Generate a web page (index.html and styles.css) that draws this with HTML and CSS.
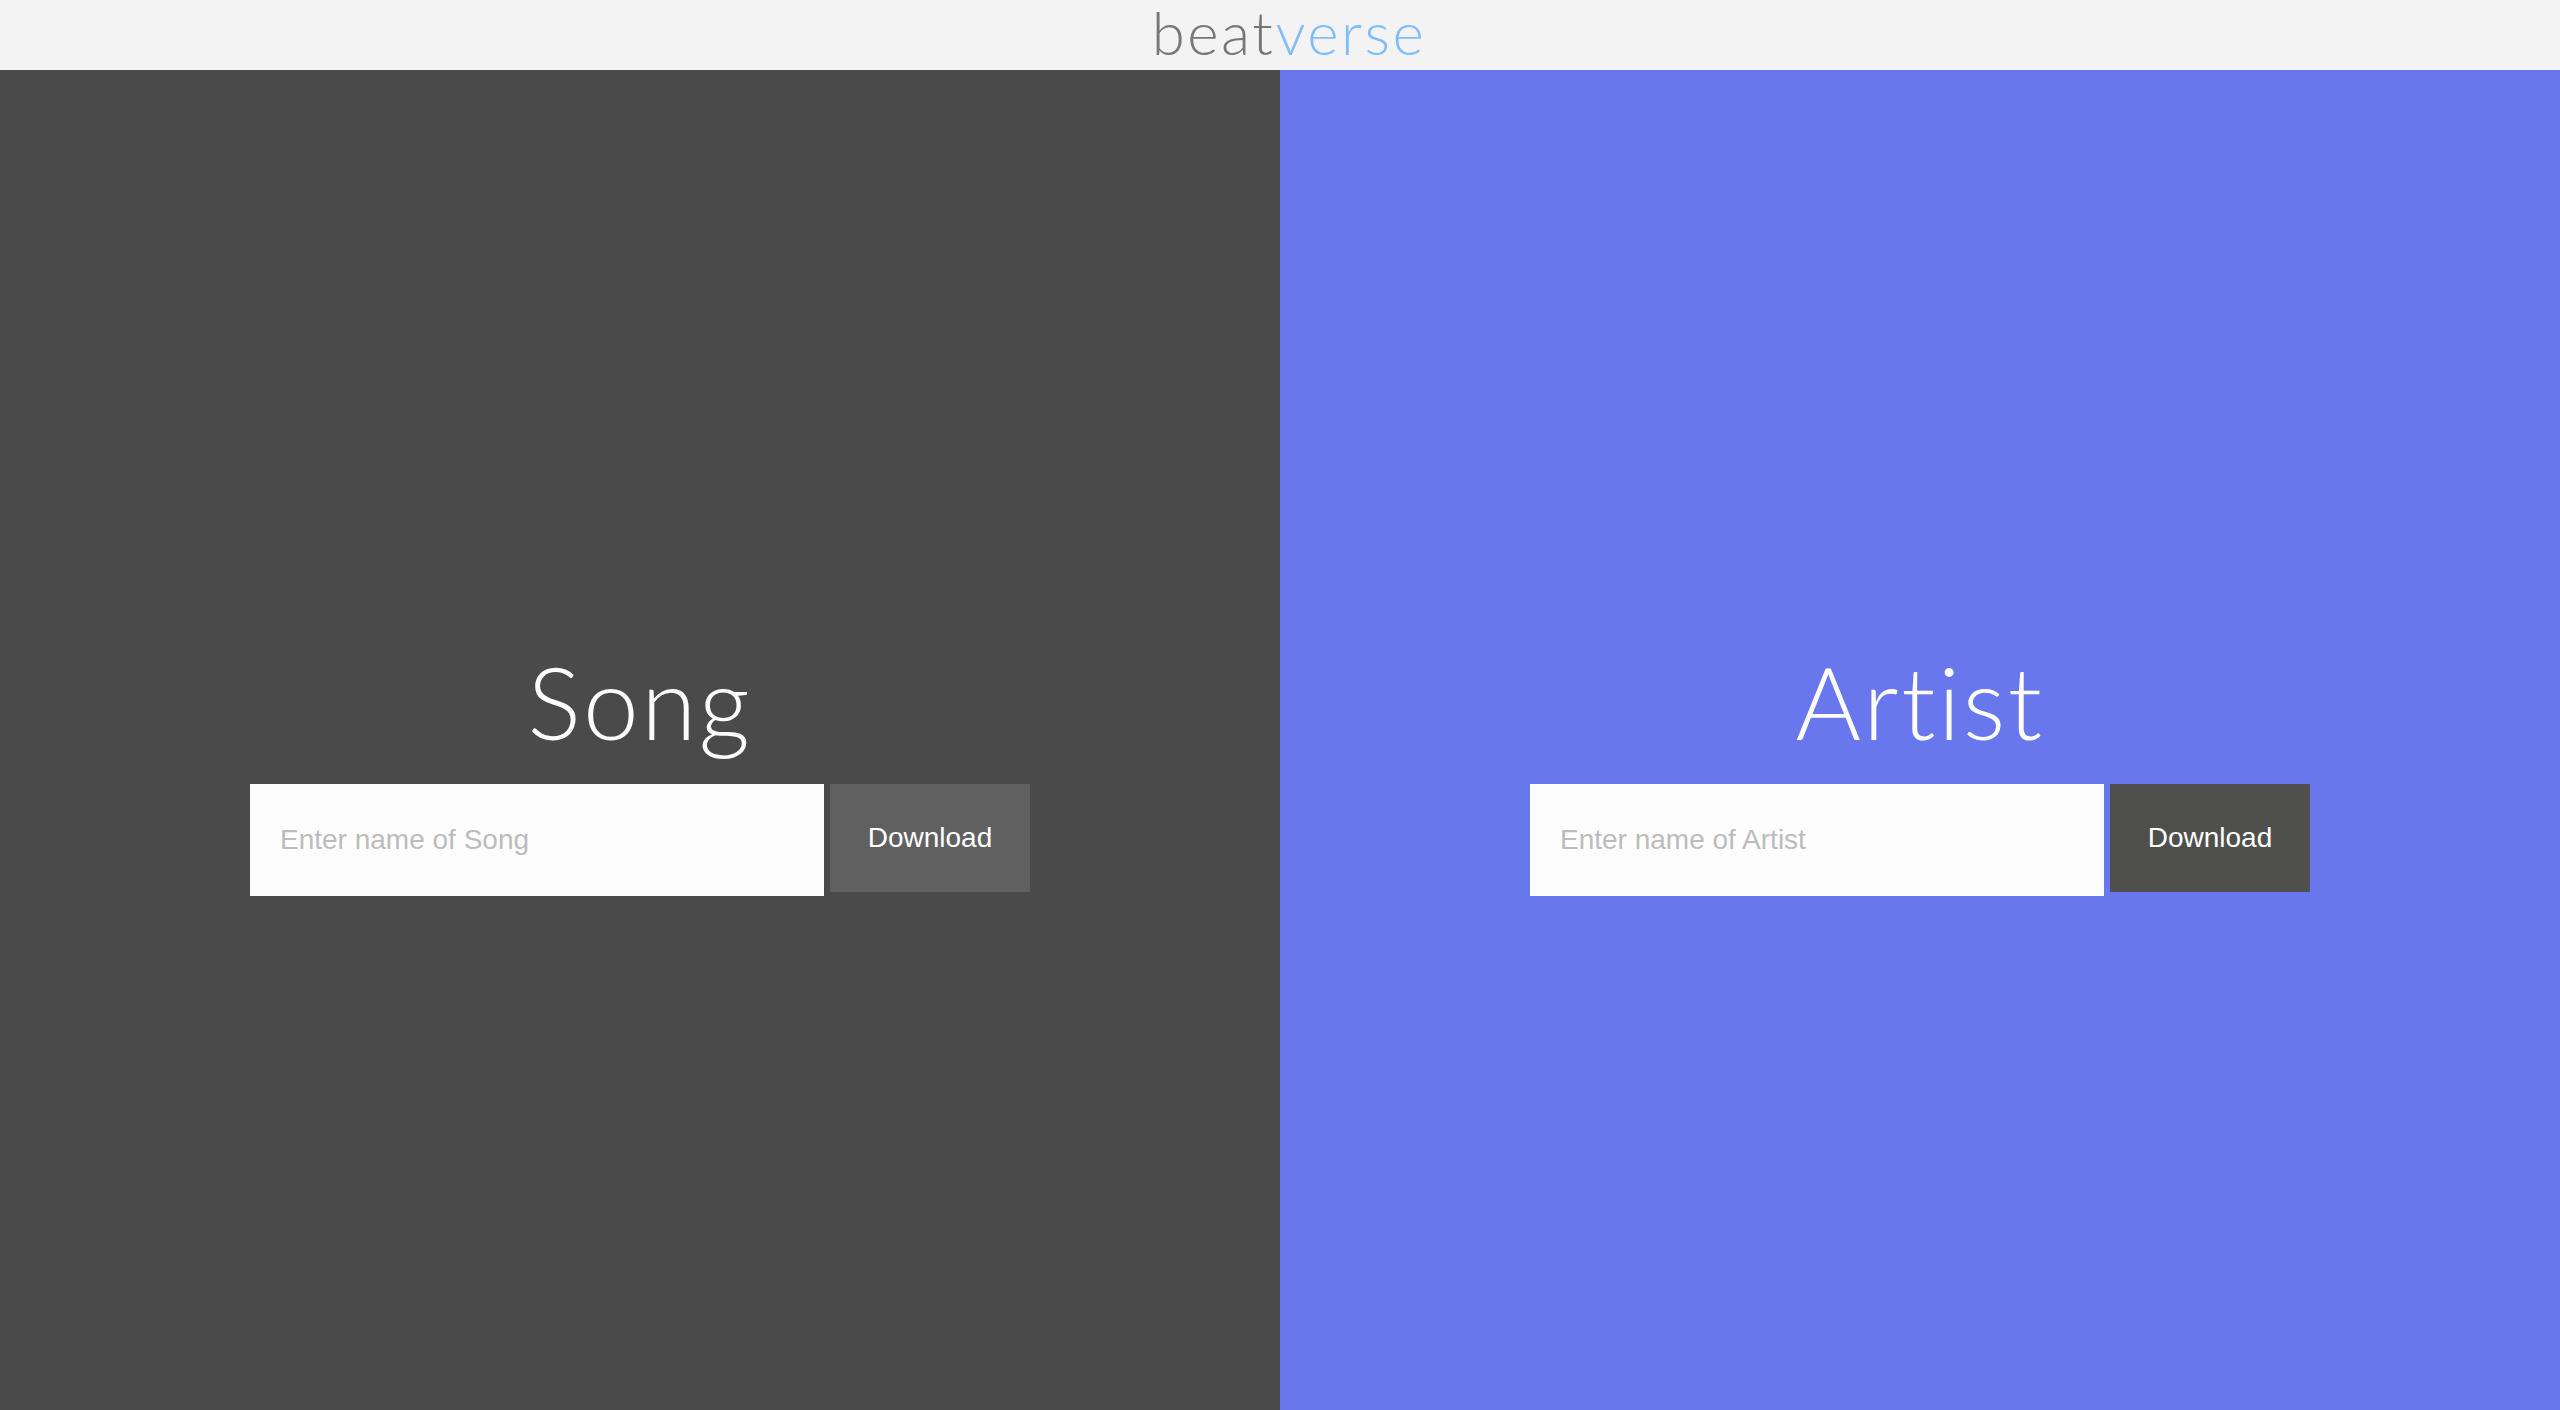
FILE: index.html
```html
<!DOCTYPE html>
<html lang="en">
<head>
    <meta charset="UTF-8">
    <meta name="viewport" content="width=device-width, initial-scale=1.0">
    <title>beatverse</title>
    <link rel="stylesheet" href="styles.css">
</head>
<body>
    <header class="topbar">
        <div class="logo"><span class="logo-beat">beat</span><span class="logo-verse">verse</span></div>
    </header>
    <main class="split">
        <section class="panel panel-song">
            <h1>Song</h1>
            <form class="search">
                <input type="text" placeholder="Enter name of Song">
                <button type="button">Download</button>
            </form>
        </section>
        <section class="panel panel-artist">
            <h1>Artist</h1>
            <form class="search">
                <input type="text" placeholder="Enter name of Artist">
                <button type="button">Download</button>
            </form>
        </section>
    </main>
</body>
</html>
```

FILE: styles.css
```css
html, body {
    margin: 0;
    height: 100%;
}
body {
    font-family: "Liberation Sans", Arial, sans-serif;
    display: flex;
    flex-direction: column;
    background: #4a4a4a;
}
.topbar {
    height: 70px;
    flex-shrink: 0;
    background: #f3f3f3;
    display: flex;
    justify-content: center;
    box-sizing: border-box;
    padding: 0 0 6px 18px;
}
.logo {
    font-family: Lato, "Open Sans", sans-serif;
    font-weight: 300;
    font-size: 60px;
    line-height: 64px;
    letter-spacing: 2.5px;
}
.logo-beat {
    color: #777;
}
.logo-verse {
    color: #80bef9;
}
.split {
    flex: 1;
    display: flex;
}
.panel {
    flex: 1;
    display: flex;
    flex-direction: column;
    align-items: center;
    justify-content: center;
    padding-top: 67px;
}
.panel-song {
    background: #4a4a4a;
}
.panel-artist {
    background: #6877eb;
}
.panel h1 {
    font-family: Lato, "Open Sans", sans-serif;
    font-weight: 300;
    font-size: 100px;
    line-height: 100px;
    letter-spacing: 2.5px;
    color: #fcfcfc;
    margin: 0 0 33px;
}
.search {
    display: flex;
    align-items: flex-start;
    gap: 6px;
}
.search input {
    width: 574px;
    height: 112px;
    box-sizing: border-box;
    border: none;
    background: #fdfdfd;
    padding: 0 30px;
    font-family: "Liberation Sans", Arial, sans-serif;
    font-size: 28px;
    color: #555;
    outline: none;
}
.search input::placeholder {
    color: #bcbcbc;
}
.search button {
    width: 200px;
    height: 108px;
    border: none;
    color: #fff;
    font-family: "Liberation Sans", Arial, sans-serif;
    font-size: 28px;
    cursor: pointer;
}
.panel-song button {
    background: #606060;
}
.panel-artist button {
    background: #4f4f4e;
}
```
